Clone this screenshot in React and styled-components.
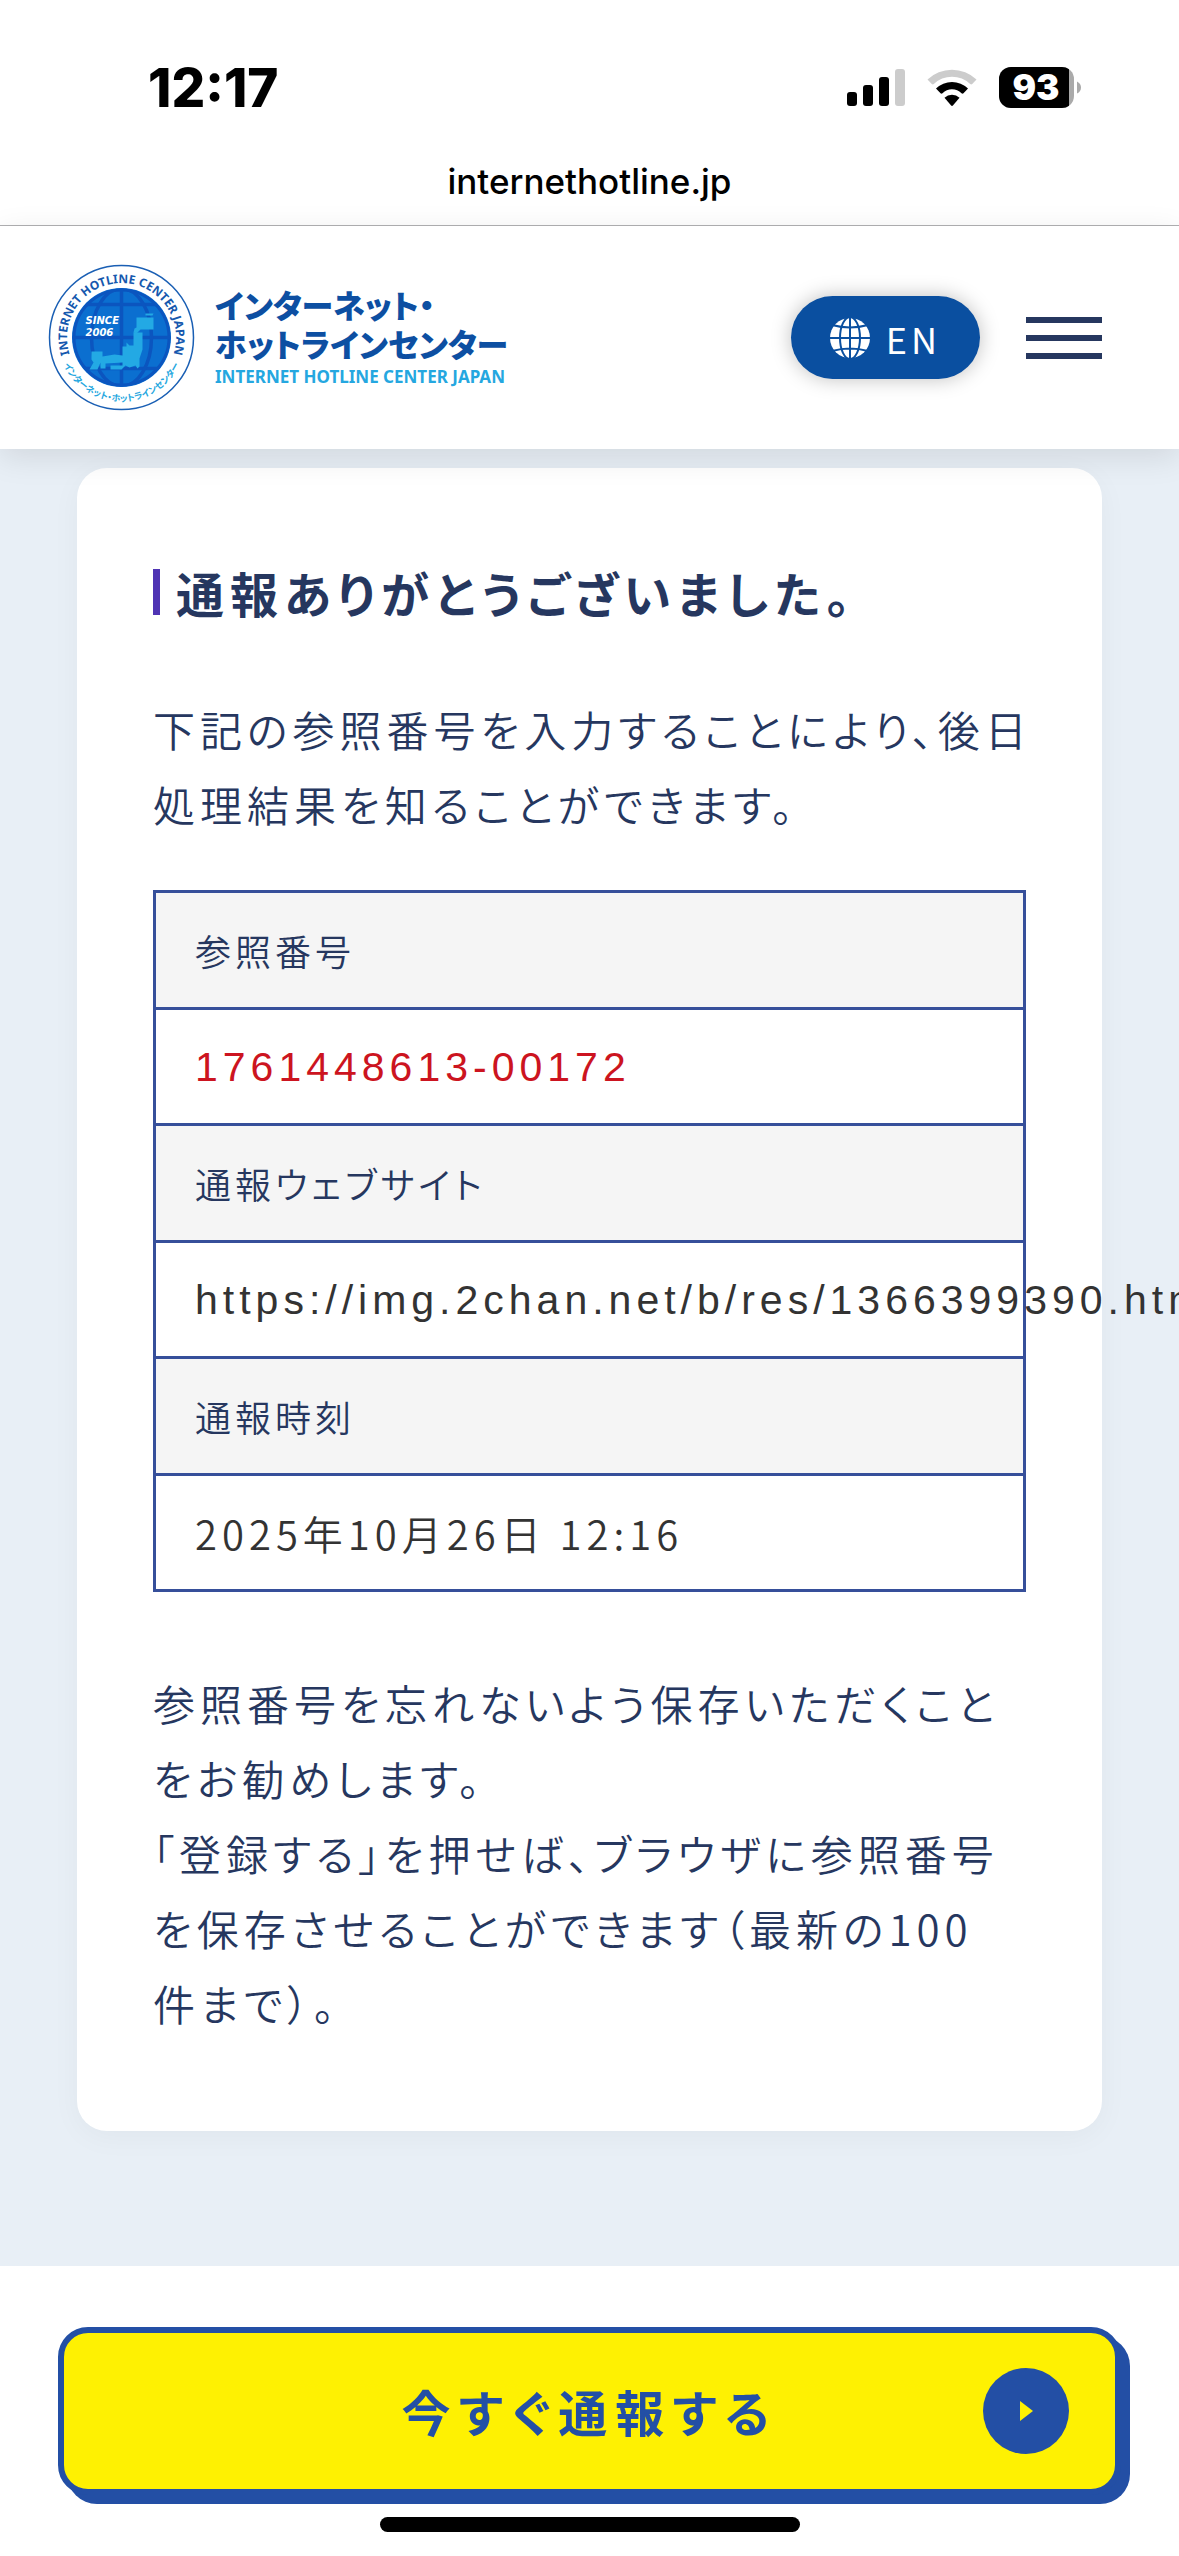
import React from 'react'
import styled, { createGlobalStyle } from 'styled-components'

const navy = '#26375f'
const blue = '#234fa5'
const sky = '#25a7e0'
const jpFont = '"Noto Sans CJK JP", sans-serif'

const GlobalStyle = createGlobalStyle`
  * {
    box-sizing: border-box;
  }

  body {
    margin: 0;
    background: #fff;
    color: ${navy};
    font-family: ${jpFont};
    font-feature-settings: 'palt';
  }
`

const Page = styled.div`
  display: flex;
  flex-direction: column;
  min-height: 100vh;
  overflow: hidden;
`

const StatusBar = styled.div`
  display: flex;
  align-items: center;
  justify-content: space-between;
  padding: 58px 98px 0 148px;
  color: #000;
  font-family: Inter, sans-serif;
`

const Clock = styled.div`
  font-size: 53px;
  line-height: 60px;
  font-weight: 800;
`

const StatusIcons = styled.div`
  display: flex;
  align-items: center;
  gap: 22px;
`

const AddressBar = styled.div`
  padding: 40px 0 21px;
  border-bottom: 1px solid #b0b0b2;
  color: #000;
  font-family: Inter, sans-serif;
  font-size: 35px;
  line-height: 46px;
  font-weight: 500;
  text-align: center;
`

const Header = styled.header`
  position: relative;
  z-index: 1;
  display: flex;
  align-items: center;
  padding: 38px 77px 38px 48px;
  background: #fff;
  box-shadow: 0 8px 30px rgba(0, 0, 0, 0.1);
`

const Logo = styled.a`
  display: flex;
  align-items: center;
  gap: 20px;
  color: #0d4fa2;
  text-decoration: none;
`

const LogoText = styled.span`
  display: flex;
  flex-direction: column;
  font-size: 32px;
  line-height: 39px;
  font-weight: 900;
  white-space: nowrap;
`

const LogoEnglish = styled.span`
  color: ${sky};
  font-family: 'Noto Sans', sans-serif;
  font-size: 17px;
  line-height: 28px;
  font-weight: 700;
`

const LanguageLink = styled.a`
  display: flex;
  align-items: center;
  gap: 15px;
  height: 83px;
  margin-left: auto;
  padding: 0 39px 0 38px;
  border-radius: 42px;
  background: #0a4fa0;
  box-shadow: 0 0 20px rgba(0, 0, 0, 0.25);
  color: #fff;
  font-size: 36px;
  line-height: 40px;
  letter-spacing: 4px;
  text-decoration: none;
`

const MenuButton = styled.button`
  display: flex;
  flex-direction: column;
  gap: 12px;
  width: 76px;
  margin-left: 46px;
  padding: 0;
  border: 0;
  background: none;
`

const MenuLine = styled.span`
  height: 6px;
  background: ${navy};
`

const Main = styled.main`
  flex: 1;
  padding: 19px 77px 134px;
  background: #e8eff6;
`

const Card = styled.section`
  padding: 94px 76px 91px;
  border-radius: 30px;
  background: #fff;
  box-shadow: 0 6px 30px rgba(0, 0, 0, 0.04);
`

const Title = styled.h1`
  display: flex;
  align-items: center;
  gap: 16px;
  margin: 0 0 69px;
  font-size: 48px;
  line-height: 60px;
  font-weight: 700;
  letter-spacing: 6px;
  white-space: nowrap;

  &::before {
    content: '';
    width: 7px;
    height: 46px;
    background: #4f34b4;
  }
`

const Text = styled.p`
  margin: 0;
  font-size: 42px;
  line-height: 75px;
  font-weight: 350;
  letter-spacing: 5px;
  white-space: nowrap;
`

const Table = styled.table`
  width: 100%;
  margin: 49px 0 73px;
  border: 3px solid #364f9a;
  border-collapse: collapse;
  table-layout: fixed;
`

const Label = styled.th`
  padding: 27px 39px;
  border: 3px solid #364f9a;
  background: #f5f5f5;
  font-size: 36px;
  line-height: 60px;
  font-weight: 350;
  letter-spacing: 4px;
  text-align: left;
`

const Value = styled.td`
  padding: 27px 39px 26px;
  border: 3px solid #364f9a;
  color: ${props => (props.$accent ? '#cc1420' : '#333')};
  font-family: ${props => (props.$latin ? '"Liberation Sans", sans-serif' : jpFont)};
  font-size: ${props => (props.$latin ? '41px' : '40px')};
  line-height: 60px;
  font-weight: 350;
  letter-spacing: 5px;
  white-space: nowrap;
`

const Footer = styled.footer`
  display: flex;
  flex-direction: column;
  align-items: center;
  gap: 22px;
  padding: 61px 58px 24px;
  background: #fff;
`

const ReportLink = styled.a`
  display: grid;
  grid-template-columns: 86px 1fr 86px;
  align-items: center;
  width: 100%;
  height: 168px;
  padding: 0 46px;
  border: 6px solid ${blue};
  border-radius: 30px;
  background: #fef102;
  box-shadow: 9px 9px 0 ${blue};
  color: ${blue};
  font-size: 49px;
  line-height: 60px;
  font-weight: 700;
  letter-spacing: 8px;
  text-align: center;
  text-decoration: none;
`

const ReportText = styled.span`
  grid-column: 2;
`

const HomeIndicator = styled.div`
  width: 420px;
  height: 15px;
  border-radius: 8px;
  background: #000;
`

const SignalIcon = () => (
  <svg width="58" height="42" viewBox="0 0 58 42" aria-hidden="true">
    <rect x="0" y="25" width="10" height="14" rx="3" />
    <rect x="16" y="18" width="10" height="21" rx="3" />
    <rect x="32" y="10" width="10" height="29" rx="3" />
    <rect x="48" y="2" width="10" height="37" rx="3" fill="#ccc" />
  </svg>
)

const WifiIcon = () => (
  <svg width="50" height="42" viewBox="0 0 50 42" aria-hidden="true">
    <path
      d="M0.5 12.5a35.5 35.5 0 0 1 49 0l-4.300 4.600a1.500 1.500 0 0 1-2 0a26 26 0 0 0-36.400 0a1.500 1.500 0 0 1-2 0z"
      fill="#ccc"
    />
    <path d="M9 21.500a23 23 0 0 1 32 0l-4.500 4.700a1.500 1.500 0 0 1-2 0a13.600 13.600 0 0 0-19 0a1.500 1.500 0 0 1-2 0z" />
    <path d="M17.500 30.800a10.800 10.800 0 0 1 15 0l-6.400 7.500a1.500 1.500 0 0 1-2.200 0z" />
  </svg>
)

const BatteryIcon = () => (
  <svg width="82" height="42" viewBox="0 0 82 42" aria-hidden="true">
    <defs>
      <clipPath id="battery-level">
        <rect width="70" height="42" />
      </clipPath>
    </defs>
    <rect y="0" width="75" height="41" rx="12" fill="#aaa" />
    <rect y="0" width="75" height="41" rx="12" clipPath="url(#battery-level)" />
    <path d="M78 14.500q4 2 4 6t-4 6z" fill="#aaa" />
    <text
      x="37"
      y="33"
      fill="#fff"
      fontFamily="Inter, sans-serif"
      fontSize="35"
      fontWeight="900"
      textAnchor="middle"
    >
      93
    </text>
  </svg>
)

const Emblem = () => (
  <svg width="147" height="147" viewBox="-73.500 -73.500 147 147" aria-hidden="true">
    <defs>
      <clipPath id="emblem-disc">
        <circle r="49" />
      </clipPath>
      <path id="emblem-top" d="M0 54.500A54.500 54.500 0 1 1 0.010 54.500" />
      <path id="emblem-bottom" d="M-64 0A64 64 0 0 0 64 0" />
    </defs>
    <circle r="72" fill="#fff" stroke="#1a5fb4" strokeWidth="1.500" />
    <circle r="49.500" fill="#0b6fd0" />
    <g clipPath="url(#emblem-disc)" fill="none" stroke="#0b55bf" strokeWidth="3.500">
      <circle r="48" strokeWidth="4" />
      <path d="M0-50V50M-50 0H50M-42-33H42M-42 31H42" />
      <ellipse rx="30" ry="49" />
    </g>
    <g fill="#23a9e4">
      <path d="M15-20h17v12h-13l-4 4l-3-1l1-4l2-1z" />
      <path d="M24-24h8l-1 2h-7z" />
      <path d="M12-5h9v17l-3 9v8l-2 2l-2-3l-6 2l-4-2l-4 4h-11v-4h12v-3l-17 1v5h-5v-6l-3 7h-8l4-7l-2-3v-8h11v5l12-2l8 1v-9h4v-4l3 3h4z" />
    </g>
    <g
      fill="#fff"
      fontFamily="DejaVu Sans, sans-serif"
      fontSize="10"
      fontWeight="700"
      fontStyle="italic"
    >
      <text x="-36" y="-14">
        SINCE
      </text>
      <text x="-36" y="-2">
        2006
      </text>
    </g>
    <text
      fill="#1558ae"
      fontFamily="Noto Sans, sans-serif"
      fontSize="12"
      fontWeight="700"
      textAnchor="middle"
    >
      <textPath href="#emblem-top" startOffset="50%">
        INTERNET HOTLINE CENTER JAPAN
      </textPath>
    </text>
    <text fill={sky} fontFamily={jpFont} fontSize="9" fontWeight="700" textAnchor="middle">
      <textPath href="#emblem-bottom" startOffset="50%">
        インターネット・ホットラインセンター
      </textPath>
    </text>
  </svg>
)

const GlobeIcon = () => (
  <svg width="42" height="42" viewBox="-21 -21 42 42" aria-hidden="true">
    <circle r="20" fill="#fff" />
    <g fill="none" stroke="#0a4fa0" strokeWidth="2">
      <path d="M0-21V21M-21 0H21M-18-13Q0-8 18-13M-18 13Q0 8 18 13" />
      <ellipse rx="10" ry="21" />
    </g>
  </svg>
)

const ArrowIcon = () => (
  <svg width="86" height="86" viewBox="0 0 86 86" aria-hidden="true">
    <circle cx="43" cy="43" r="43" fill={blue} />
    <path d="M37 33l13 10l-13 10z" fill="#fef102" />
  </svg>
)

const App = () => (
  <Page>
    <GlobalStyle />
    <StatusBar>
      <Clock>12:17</Clock>
      <StatusIcons>
        <SignalIcon />
        <WifiIcon />
        <BatteryIcon />
      </StatusIcons>
    </StatusBar>
    <AddressBar>internethotline.jp</AddressBar>

    <Header>
      <Logo href="#">
        <Emblem />
        <LogoText>
          <span>インターネット・</span>
          <span>ホットラインセンター</span>
          <LogoEnglish>INTERNET HOTLINE CENTER JAPAN</LogoEnglish>
        </LogoText>
      </Logo>
      <LanguageLink href="#en">
        <GlobeIcon />
        EN
      </LanguageLink>
      <MenuButton type="button" aria-label="メニュー">
        <MenuLine />
        <MenuLine />
        <MenuLine />
      </MenuButton>
    </Header>

    <Main>
      <Card>
        <Title>通報ありがとうございました。</Title>
        <Text>
          下記の参照番号を入力することにより、後日
          <br />
          処理結果を知ることができます。
        </Text>
        <Table>
          <tbody>
            <tr>
              <Label scope="row">参照番号</Label>
            </tr>
            <tr>
              <Value $latin $accent>
                1761448613-00172
              </Value>
            </tr>
            <tr>
              <Label scope="row">通報ウェブサイト</Label>
            </tr>
            <tr>
              <Value $latin>https://img.2chan.net/b/res/1366399390.htm</Value>
            </tr>
            <tr>
              <Label scope="row">通報時刻</Label>
            </tr>
            <tr>
              <Value>2025年10月26日 12:16</Value>
            </tr>
          </tbody>
        </Table>
        <Text>
          参照番号を忘れないよう保存いただくこと
          <br />
          をお勧めします。
          <br />
          「登録する」を押せば、ブラウザに参照番号
          <br />
          を保存させることができます（最新の100
          <br />
          件まで）。
        </Text>
      </Card>
    </Main>

    <Footer>
      <ReportLink href="#report">
        <ReportText>今すぐ通報する</ReportText>
        <ArrowIcon />
      </ReportLink>
      <HomeIndicator />
    </Footer>
  </Page>
)

export default App
